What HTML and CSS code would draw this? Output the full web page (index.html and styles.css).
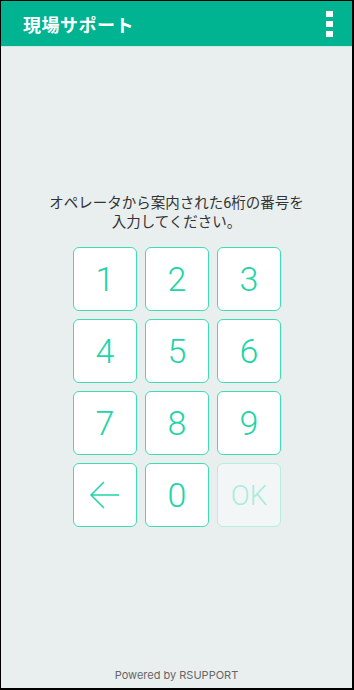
FILE: index.html
```html
<!DOCTYPE html>
<html>

<head>
    <meta charset="UTF-8">
    <meta name="viewport" content="width=device-width,initial-scale=1">
    <title>現場サポート</title>
    <link rel="stylesheet" href="styles.css">
</head>

<body>
    <div class="frame">
        <header class="app_bar">
            <h1 class="app_title">現場サポート</h1>
            <div class="menu_btn">
                <span></span>
                <span></span>
                <span></span>
            </div>
        </header>
        <main class="content">
            <p class="guide">オペレータから案内された6桁の番号を<br>入力してください。</p>
            <div class="keypad">
                <button class="key">1</button>
                <button class="key">2</button>
                <button class="key">3</button>
                <button class="key">4</button>
                <button class="key">5</button>
                <button class="key">6</button>
                <button class="key">7</button>
                <button class="key">8</button>
                <button class="key">9</button>
                <button class="key key_back">
                    <svg width="32" height="30" viewBox="0 0 32 30">
                        <path d="M30 15H2M15 2L2 15l13 13" fill="none" stroke="#22d4a8" stroke-width="1.5" />
                    </svg>
                </button>
                <button class="key">0</button>
                <button class="key key_ok" disabled>OK</button>
            </div>
        </main>
        <footer class="powered">Powered by RSUPPORT</footer>
    </div>
</body>

</html>
```

FILE: styles.css
```css
* {
    margin: 0;
    padding: 0;
    box-sizing: border-box;
}

html,
body {
    width: 354px;
    height: 690px;
    background: #000;
    font-family: Roboto, "Noto Sans CJK JP", sans-serif;
}

.frame {
    width: 354px;
    height: 690px;
    border-style: solid;
    border-color: #000;
    border-width: 1px 2px 2px 1px;
    background: #e9efef;
    display: flex;
    flex-direction: column;
}

.app_bar {
    height: 46px;
    background: #00b491;
    border-bottom: 1px solid #c9ebe2;
    display: flex;
    align-items: center;
    justify-content: space-between;
    padding: 0 19px 0 22px;
}

.app_title {
    color: #fff;
    font-size: 18px;
    font-weight: bold;
    letter-spacing: 0.5px;
}

.menu_btn {
    display: flex;
    flex-direction: column;
    gap: 4px;
    padding-top: 1px;
}

.menu_btn span {
    display: block;
    width: 7px;
    height: 6px;
    background: #fff;
}

.content {
    flex: 1;
    display: flex;
    flex-direction: column;
    align-items: center;
    padding-top: 147px;
}

.guide {
    font-size: 14.5px;
    line-height: 19px;
    color: #333;
    text-align: center;
}

.keypad {
    margin-top: 15px;
    display: grid;
    grid-template-columns: repeat(3, 64px);
    grid-auto-rows: 64px;
    gap: 8px;
    margin-left: 1px;
}

.key {
    border: 1px solid #3ddcb4;
    border-radius: 6px;
    background: #fff;
    color: #1fd4a7;
    font-family: Roboto, sans-serif;
    font-weight: 300;
    font-size: 34px;
    display: flex;
    align-items: center;
    justify-content: center;
}

.key_ok {
    background: #f3f6f7;
    border-color: #b4eedf;
    color: #a9ecdb;
    font-size: 28px;
}

.powered {
    height: 30px;
    text-align: center;
    font-size: 11px;
    color: #666;
    font-family: Inter, "Liberation Sans", sans-serif;
    padding-top: 10px;
}
```
